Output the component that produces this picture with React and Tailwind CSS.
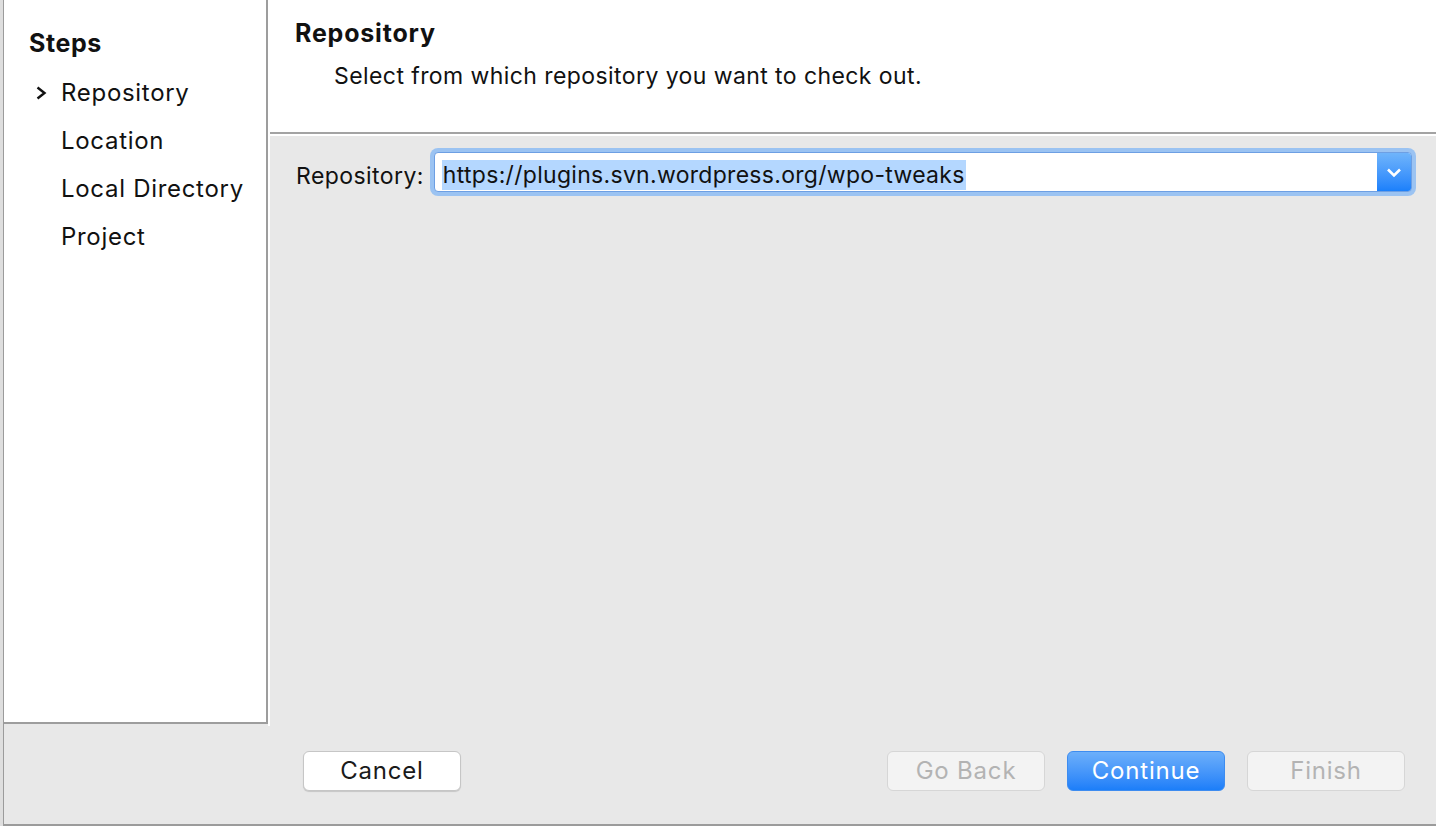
import { useState } from "react";

const steps = ["Repository", "Location", "Local Directory", "Project"];

function Chevron({ className }) {
  return (
    <svg viewBox="0 0 12 16" className={className} fill="none">
      <path d="M2.5 2.5 L9.5 8 L2.5 13.5" stroke="currentColor" strokeWidth="2.4" />
    </svg>
  );
}

function ChevronDown({ className }) {
  return (
    <svg viewBox="0 0 16 11" className={className} fill="none">
      <path d="M2 2.5 L8 8.5 L14 2.5" stroke="currentColor" strokeWidth="2.6" />
    </svg>
  );
}

export default function App() {
  const [current] = useState(0);
  const [repo] = useState("https://plugins.svn.wordpress.org/wpo-tweaks");

  return (
    <div
      className="w-[1436px] h-[826px] bg-[#dedede] pl-[3px] overflow-hidden text-[#111]"
      style={{ fontFamily: "Inter, 'Liberation Sans', sans-serif" }}
    >
      <div className="h-full flex flex-col bg-[#e8e8e8] border-l border-b-2 border-[#9b9b9b]">
        {/* Top: sidebar + page */}
        <div className="h-[726px] flex">
          {/* Steps sidebar */}
          <div className="w-[264px] h-[724px] bg-white border-r-2 border-b-2 border-[#9d9d9d] pt-[27px] pl-[25px]">
            <h2 className="text-[25px] font-bold leading-[32px] tracking-[0.6px]">Steps</h2>
            <ul className="mt-[18px] flex flex-col gap-[16px]">
              {steps.map((s, i) => (
                <li key={s} className="flex items-center h-[32px] text-[24px] tracking-[0.7px]">
                  <span className="w-[32px] flex justify-start pl-[6px]">
                    {i === current && <Chevron className="w-[12px] h-[16px]" />}
                  </span>
                  {s}
                </li>
              ))}
            </ul>
          </div>

          {/* Page */}
          <div className="flex-1 flex flex-col border-l-2 border-white">
            <div className="h-[134px] bg-white border-b-2 border-[#a3a3a3] pl-[25px] pt-[18px]">
              <h1 className="text-[25px] font-bold leading-[30px] tracking-[0.8px]">Repository</h1>
              <p className="mt-[14px] pl-[39px] text-[23px] leading-[28px] tracking-[0.42px]">
                Select from which repository you want to check out.
              </p>
            </div>
            <div className="h-[2px] bg-white" />
            <div className="flex-1 pt-[12px] pl-[26px] pr-[20px]">
              <div className="flex items-center gap-[6px]">
                <label className="text-[23px] leading-[28px] tracking-[0.43px] pt-[7px]">Repository:</label>
                <div className="flex-1 h-[48px] rounded-[8px] bg-[#9bc3f2] p-[4px]">
                  <div className="h-full flex rounded-[4px] border border-[#6d9fe3] bg-white overflow-hidden">
                    <div className="flex-1 flex items-center pl-[7px] pt-[6px]">
                      <span className="bg-[#b4d7ff] text-[23px] leading-[30px] px-[1px] tracking-[0.3px]">
                        {repo}
                      </span>
                    </div>
                    <div className="w-[34px] bg-gradient-to-b from-[#6fb4fb] to-[#1a80fb] flex items-center justify-center text-white">
                      <ChevronDown className="w-[16px] h-[11px]" />
                    </div>
                  </div>
                </div>
              </div>
            </div>
          </div>
        </div>

        {/* Buttons */}
        <div className="flex-1 flex items-start pt-[25px] pl-[299px] pr-[31px]">
          <button className="w-[158px] h-[40px] rounded-[6px] bg-white border border-[#c6c6c6] shadow-[0_1px_1px_rgba(0,0,0,0.15)] text-[24px] tracking-[0.8px] text-[#1a1a1a]">
            Cancel
          </button>
          <div className="ml-auto flex gap-[22px]">
            <button className="w-[158px] h-[40px] rounded-[6px] bg-[#f3f3f3] border border-[#d6d6d6] text-[24px] tracking-[0.8px] text-[#b3b3b3]">
              Go Back
            </button>
            <button className="w-[158px] h-[40px] rounded-[6px] bg-gradient-to-b from-[#6caffa] to-[#1b7ef9] border border-[#3d8cf0] text-[24px] tracking-[0.8px] text-white">
              Continue
            </button>
            <button className="w-[158px] h-[40px] rounded-[6px] bg-[#f3f3f3] border border-[#d6d6d6] text-[24px] tracking-[0.8px] text-[#b3b3b3]">
              Finish
            </button>
          </div>
        </div>
      </div>
    </div>
  );
}
